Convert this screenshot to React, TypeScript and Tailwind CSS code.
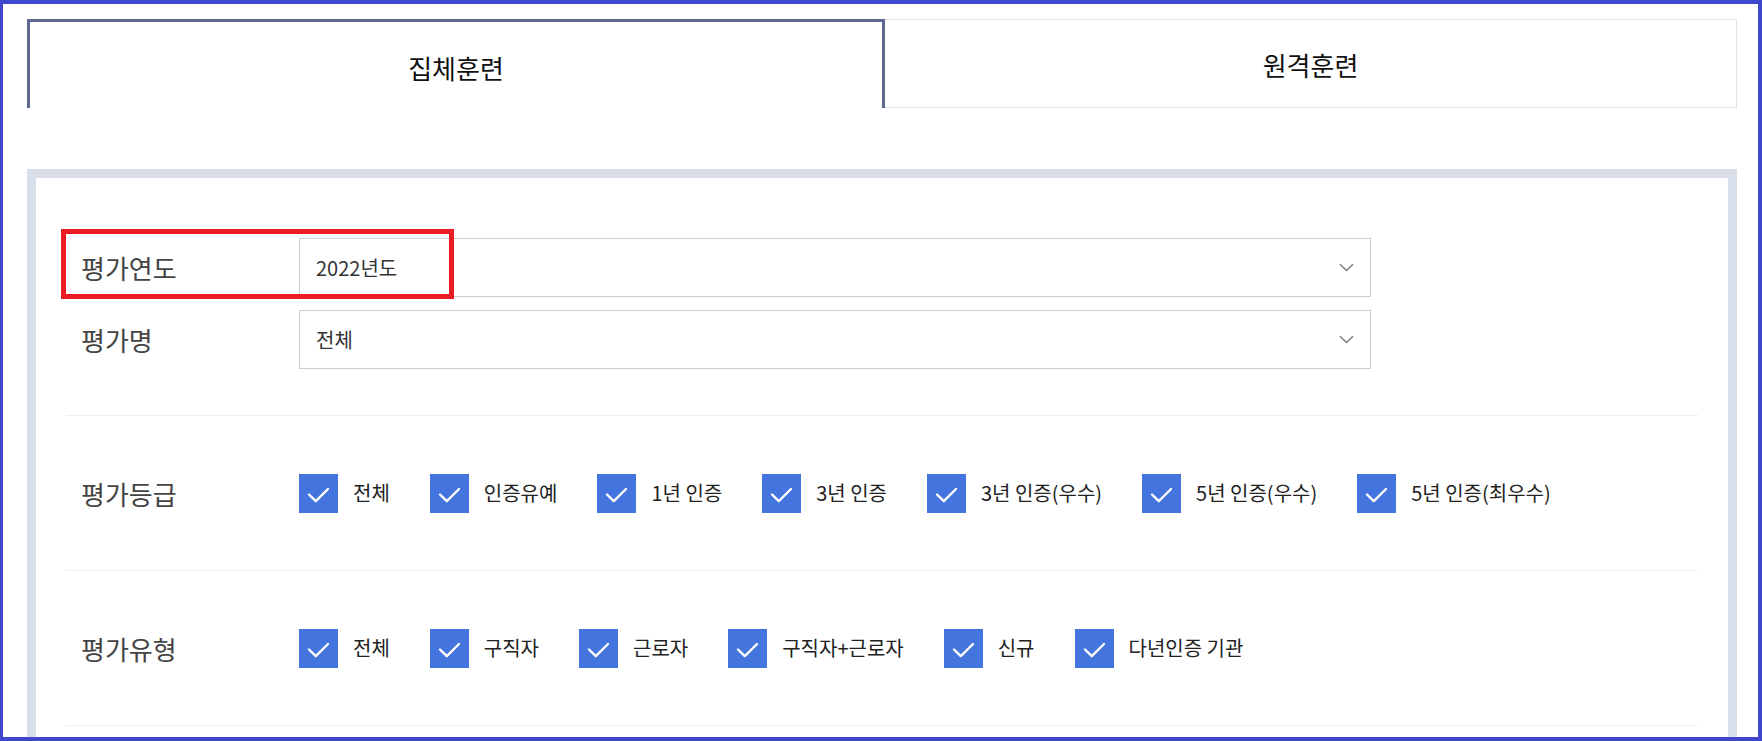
const font = { fontFamily: '"Noto Sans CJK KR", "Noto Sans", sans-serif' };

const grades = ['전체', '인증유예', '1년 인증', '3년 인증', '3년 인증(우수)', '5년 인증(우수)', '5년 인증(최우수)'];
const types = ['전체', '구직자', '근로자', '구직자+근로자', '신규', '다년인증 기관'];

function Chevron() {
  return (
    <svg width="15" height="9" viewBox="0 0 15 9" fill="none">
      <path d="M1 1.2l6.5 6.3 6.5-6.3" stroke="#7a7a7a" strokeWidth="1.5" />
    </svg>
  );
}

function Select({ value }: { value: string }) {
  return (
    <div className="w-[1072px] h-[59px] border border-[#cccccc] bg-white flex items-center justify-between pl-[16px] pr-[16px] text-[20px] text-[#333333]">
      <span>{value}</span>
      <Chevron />
    </div>
  );
}

function Check({ label }: { label: string }) {
  return (
    <label className="flex items-center mr-[40px]">
      <span className="w-[39px] h-[39px] bg-[#4474de] flex items-center justify-center shrink-0">
        <svg width="39" height="39" viewBox="0 0 39 39" fill="none">
          <path d="M10 20.5l6.8 6.7 12.2-12.2" stroke="#ffffff" strokeWidth="2.4" strokeLinecap="round" strokeLinejoin="round" />
        </svg>
      </span>
      <span className="ml-[15px] text-[20px] text-[#222222] whitespace-nowrap">{label}</span>
    </label>
  );
}

export default function App() {
  return (
    <div
      style={font}
      className="w-[1762px] h-[741px] overflow-hidden bg-white border-[#3f48cc] border-t-4 border-r-4 border-b-4 border-l-[3px]"
    >
      <div className="pt-[15px] pl-[24px] pr-[21px]">
        <div className="flex h-[89px]">
          <div className="w-[858px] border-t-[3px] border-x-[3px] border-[#5d6890] flex items-center justify-center text-[26px] text-[#111111] pt-[4px]">
            집체훈련
          </div>
          <div className="flex-1 border-t border-r border-b border-[#e2e2e2] flex items-center justify-center text-[26px] text-[#111111] pt-[2px]">
            원격훈련
          </div>
        </div>

        <div className="mt-[61px] border-[9px] border-[#d8dfea] px-[30px] h-[600px]">
          <div className="relative pt-[60px] pb-[46px]">
            <div className="flex items-center pl-[15px]">
              <div className="w-[218px] text-[26px] text-[#444444]">평가연도</div>
              <Select value="2022년도" />
            </div>
            <div className="flex items-center pl-[15px] mt-[13px]">
              <div className="w-[218px] text-[26px] text-[#444444]">평가명</div>
              <Select value="전체" />
            </div>
            <div className="absolute left-[-5px] top-[51px] w-[393px] h-[70px] border-[5px] border-[#ec1c24]" />
          </div>

          <div className="h-[155px] border-t border-[#eeeeee] flex items-center pl-[15px]">
            <div className="w-[218px] text-[26px] text-[#444444]">평가등급</div>
            <div className="flex items-center">
              {grades.map((g) => (
                <Check key={g} label={g} />
              ))}
            </div>
          </div>

          <div className="h-[155px] border-t border-[#eeeeee] flex items-center pl-[15px]">
            <div className="w-[218px] text-[26px] text-[#444444]">평가유형</div>
            <div className="flex items-center">
              {types.map((t) => (
                <Check key={t} label={t} />
              ))}
            </div>
          </div>

          <div className="h-[155px] border-t border-[#eeeeee]" />
        </div>
      </div>
    </div>
  );
}
